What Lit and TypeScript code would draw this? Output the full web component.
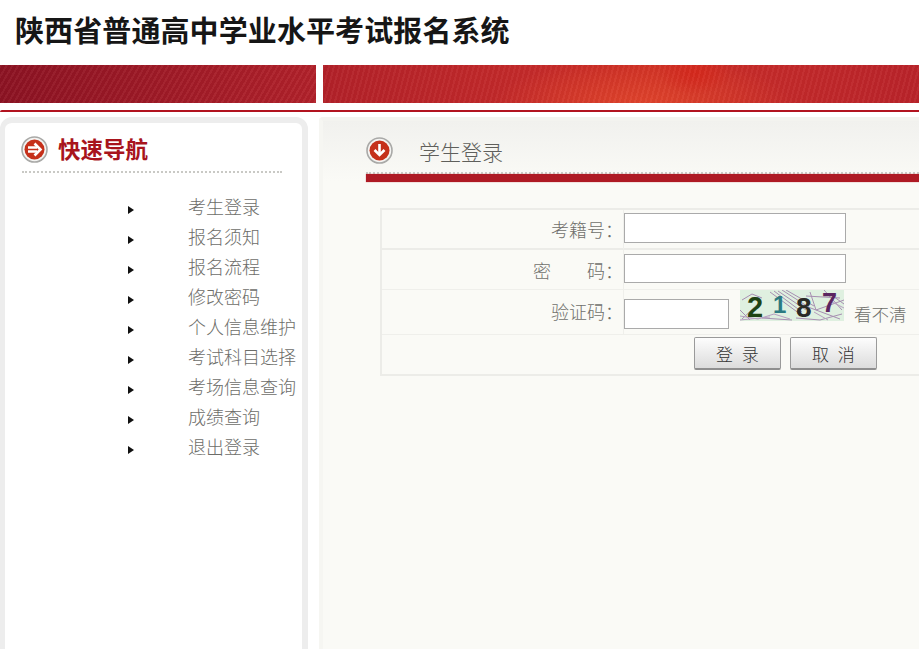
import { LitElement, html, css, svg } from "lit";
import { customElement } from "lit/decorators.js";

const MENU = ["考生登录","报名须知","报名流程","修改密码","个人信息维护","考试科目选择","考场信息查询","成绩查询","退出登录"];

@customElement("app-root")
export class AppRoot extends LitElement {
  static styles = css`
    :host { display: block; width: 919px; height: 649px; overflow: hidden; background: #fff;
      font-family: "Noto Sans CJK SC", "Liberation Sans", sans-serif; font-weight: 300; color: #6f6f6b; }
    .header { height: 65px; display: flex; align-items: center; padding: 0 0 8px 15px; box-sizing: border-box; }
    .header h1 { margin: 0; font-size: 29px; line-height: 32px; font-weight: 700; color: #161616; white-space: nowrap; letter-spacing: 0.1px; }
    .banner { height: 38px; display: flex; gap: 7px; }
    .bl, .br { position: relative; overflow: hidden; }
    .bl { width: 316px; flex: none; background:
      repeating-linear-gradient(120deg, rgba(255,255,255,.045) 0 2px, rgba(0,0,0,.035) 2px 5px),
      linear-gradient(90deg, #8d1323, #b2212a); }
    .br { flex: 1; background:
      repeating-linear-gradient(105deg, rgba(255,255,255,.04) 0 2px, rgba(0,0,0,.025) 2px 5px),
      radial-gradient(ellipse 36px 22px at 372px 8px, #d6281c, rgba(214,40,28,0) 100%),
      radial-gradient(ellipse 150px 44px at 320px 38px, #df432c, rgba(223,67,44,0) 100%),
      linear-gradient(90deg, #b22129 0, #c42a2a 210px, #cf2f24 330px, #c42a2a 450px, #b9232a 596px); }
    .rule { height: 2px; margin-top: 7px; background: #b2131f; border-top-left-radius: 2px; }
    .main { display: flex; gap: 11px; margin-top: 5px; height: 532px; }
    .side { width: 308px; flex: none; box-sizing: border-box; height: 560px; background: #fff;
      border: 6px solid #ededed; border-left-width: 5px; border-radius: 12px; padding: 13px 0 0 16px; }
    .sec { display: flex; align-items: center; height: 27px; }
    .side h2 { margin: 0 0 2px 10px; font-size: 22.5px; line-height: 27px; font-weight: 700; color: #a8141c; letter-spacing: 0; }
    .dots { height: 0; border-top: 2px dotted #c9c9c5; }
    .side .dots { width: 260px; margin: 8px 0 0 1px; }
    .menu { list-style: none; margin: 18px 0 0; padding: 0 0 0 107px; }
    .menu li { height: 30px; display: flex; align-items: center; font-size: 18px; line-height: 30px; color: #6d6d69; white-space: nowrap; }
    .arrow { width: 0; height: 0; border-left: 6px solid #111; border-top: 4.5px solid transparent; border-bottom: 4.5px solid transparent; margin: 7px 54px 0 0; flex: none; }
    .panel { flex: 1; min-width: 0; height: 560px; box-sizing: border-box; padding: 16px 0 0 43px; overflow: hidden;
      border-left: 4px solid #f6f6f2; border-top: 4px solid #f3f3ef; border-radius: 4px 0 0 0;
      background: linear-gradient(180deg, #f1f1ee 0, #fafaf6 60px, #fafaf6 100%); }
    .panel .sec { height: 27px; }
    .panel h2 { margin: 2px 0 0 26px; font-size: 21px; line-height: 27px; font-weight: 300; color: #5f5f5b; }
    .panel .dots { margin-top: 8px; }
    .redbar { height: 8px; background: #ae1a24; box-shadow: 0 0 1px #c9636a; }
    .tbl { width: 640px; margin: 26px 0 0 14px; box-sizing: border-box; border: 2px solid #ececE8; border-right: 0; display: grid;
      grid-template-columns: 242px 1fr; grid-template-rows: 40px 40px 45px 39px; font-size: 18px; }
    .l, .f { display: flex; align-items: center; box-sizing: border-box; }
    .l { justify-content: flex-end; border-right: 1px solid #efefeb; border-bottom: 1px solid #efefeb; color: #6f6f6b; white-space: pre; }
    .f { border-bottom: 1px solid #efefeb; }
    .l.r1, .f.r1 { border-bottom: 2px solid #ececE8; }
    .l.r3 { padding-bottom: 2px; }
    input { display: block; box-sizing: border-box; border: 1px solid #aaa; background: #fff; padding: 0; margin: 0; height: 30px; width: 222px; border-radius: 0; outline: none; }
    .f.r1 input { margin-top: -2px; }
    .f.r2 input { margin-bottom: 2px; height: 29px; }
    .f.r3 { align-items: flex-start; }
    .f.r3 input { width: 105px; margin-top: 9px; height: 30px; }
    .cap { position: relative; width: 104px; height: 31px; margin-left: 11px; background: #dff0e0; font-family: "Liberation Sans", sans-serif; font-weight: 700; line-height: 26px; flex: none; }
    .cap svg { position: absolute; inset: 0; }
    .cap span { position: absolute; }
    .d1 { left: 7px; top: 4px; color: #1f4314; font-size: 29px; }
    .d2 { left: 33px; top: 2px; color: #2c7a80; font-size: 24px; }
    .d3 { left: 56px; top: 5px; color: #2b2b26; font-size: 28px; }
    .d4 { left: 82px; top: 0; color: #5a2560; font-size: 27px; }
    .see { margin: 13px 0 0 10px; font-size: 17.5px; line-height: 22px; color: #6f6f6b; white-space: nowrap; }
    .btns { grid-column: 1 / 3; display: flex; gap: 9px; padding: 2px 0 0 312px; box-sizing: border-box; align-items: flex-start; }
    button { width: 87px; height: 33px; box-sizing: border-box; border: 1px solid #9a9a9a; border-bottom: 2px solid #8f8f8f; border-radius: 2px;
      background: linear-gradient(180deg, #fdfdfd, #dcdcdc); font: 300 17px "Noto Sans CJK SC", sans-serif; color: #333; padding: 0; word-spacing: 5px; }
  `;

  private icon(dir: "right" | "down") {
    const p = dir === "right"
      ? svg`<path d="M7 11.5h9M7 15.5h9" stroke="#fff" stroke-width="2.4"/><path d="M13.5 7.5l6 6-6 6" stroke="#fff" stroke-width="2.6" fill="none"/>`
      : svg`<path d="M13.5 7v10" stroke="#fff" stroke-width="2.6"/><path d="M8.5 13l5 5 5-5" stroke="#fff" stroke-width="2.6" fill="none"/>`;
    return html`<svg width="27" height="27" viewBox="0 0 27 27" style="flex:none">
      <circle cx="13.5" cy="13.5" r="12.5" fill="#f4f4f2" stroke="#a9a9a7" stroke-width="1.6"/>
      <circle cx="13.5" cy="13.5" r="10" fill="#c5301a"/>${p}</svg>`;
  }

  render() {
    return html`
      <div class="header"><h1>陕西省普通高中学业水平考试报名系统</h1></div>
      <div class="banner"><div class="bl"></div><div class="br"></div></div>
      <div class="rule"></div>
      <div class="main">
        <aside class="side">
          <div class="sec">${this.icon("right")}<h2>快速导航</h2></div>
          <div class="dots"></div>
          <ul class="menu">
            ${MENU.map((m) => html`<li><i class="arrow"></i>${m}</li>`)}
          </ul>
        </aside>
        <section class="panel">
          <div class="sec">${this.icon("down")}<h2>学生登录</h2></div>
          <div class="dots"></div>
          <div class="redbar"></div>
          <div class="tbl">
            <div class="l r1">考籍号：</div>
            <div class="f r1"><input type="text" /></div>
            <div class="l r2">密　　码：</div>
            <div class="f r2"><input type="password" /></div>
            <div class="l r3">验证码：</div>
            <div class="f r3">
              <input type="text" />
              <div class="cap">
                <svg width="104" height="31" viewBox="0 0 104 31" fill="none" stroke="#a78fb2" stroke-width="1">
                  <path d="M2 29L20 12M0 20L10 30M30 2L60 24M34 1L62 22M38 1L66 20M42 0L70 18M46 0L74 16M56 28L80 30L102 24M60 14L100 29M70 2L76 20L104 10M84 0L102 20M2 10L12 4L22 8M22 28L52 30M90 4L104 14M66 6L100 8"/>
                  <path d="M0 26L18 29L34 24L50 29M74 22L88 30M92 12L104 18M0 30L30 27" stroke="#b79fc0"/>
                </svg>
                <span class="d1">2</span><span class="d2">1</span><span class="d3">8</span><span class="d4">7</span>
              </div>
              <span class="see">看不清</span>
            </div>
            <div class="btns"><button>登 录</button><button>取 消</button></div>
          </div>
        </section>
      </div>
    `;
  }
}
